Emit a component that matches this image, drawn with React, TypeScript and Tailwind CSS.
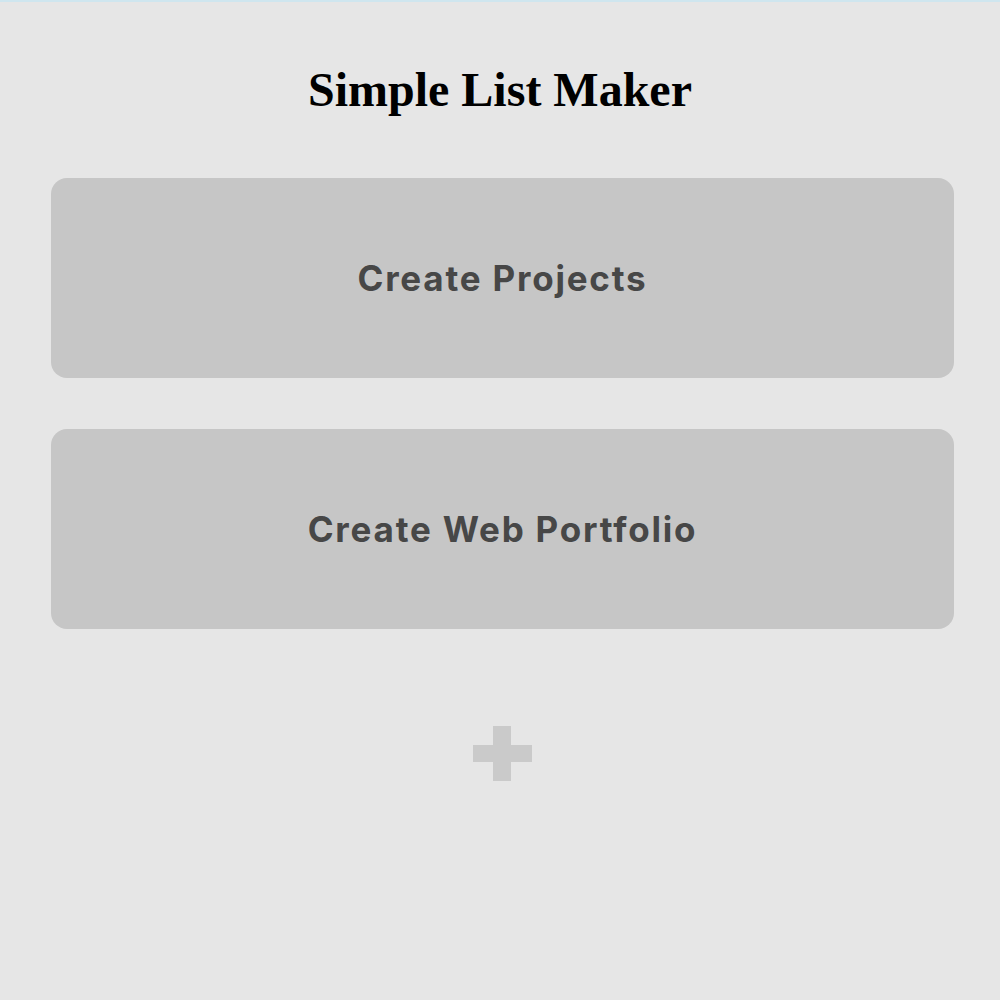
const lists = ['Create Projects', 'Create Web Portfolio'];

const PlusIcon = () => (
    <svg width="59" height="55" viewBox="0 0 59 55" className="block">
        <rect x="20" y="0" width="18" height="55" fill="#cacaca" />
        <rect x="0" y="19" width="59" height="17" fill="#cacaca" />
    </svg>
);

const App = () => (
    <div className="min-h-[1000px] bg-[#e6e6e6] border-t-2 border-[#cfe6ef]">
        <h1 className="pt-[58px] text-center text-[48px] leading-[60px] font-bold text-black font-['Liberation_Serif',serif]">
            Simple List Maker
        </h1>

        <div className="mt-[58px] pl-[51px] pr-[46px] flex flex-col gap-[51px]">
            {lists.map((name) => (
                <div
                    key={name}
                    className="h-[200px] rounded-[16px] bg-[#c6c6c6] flex items-center justify-center"
                >
                    <span className="text-[35px] font-bold tracking-[1.8px] text-[#474747] font-['Inter',sans-serif]">
                        {name}
                    </span>
                </div>
            ))}
        </div>

        <div className="mt-[97px] flex justify-center pl-[5px]">
            <PlusIcon />
        </div>
    </div>
);

export default App;
